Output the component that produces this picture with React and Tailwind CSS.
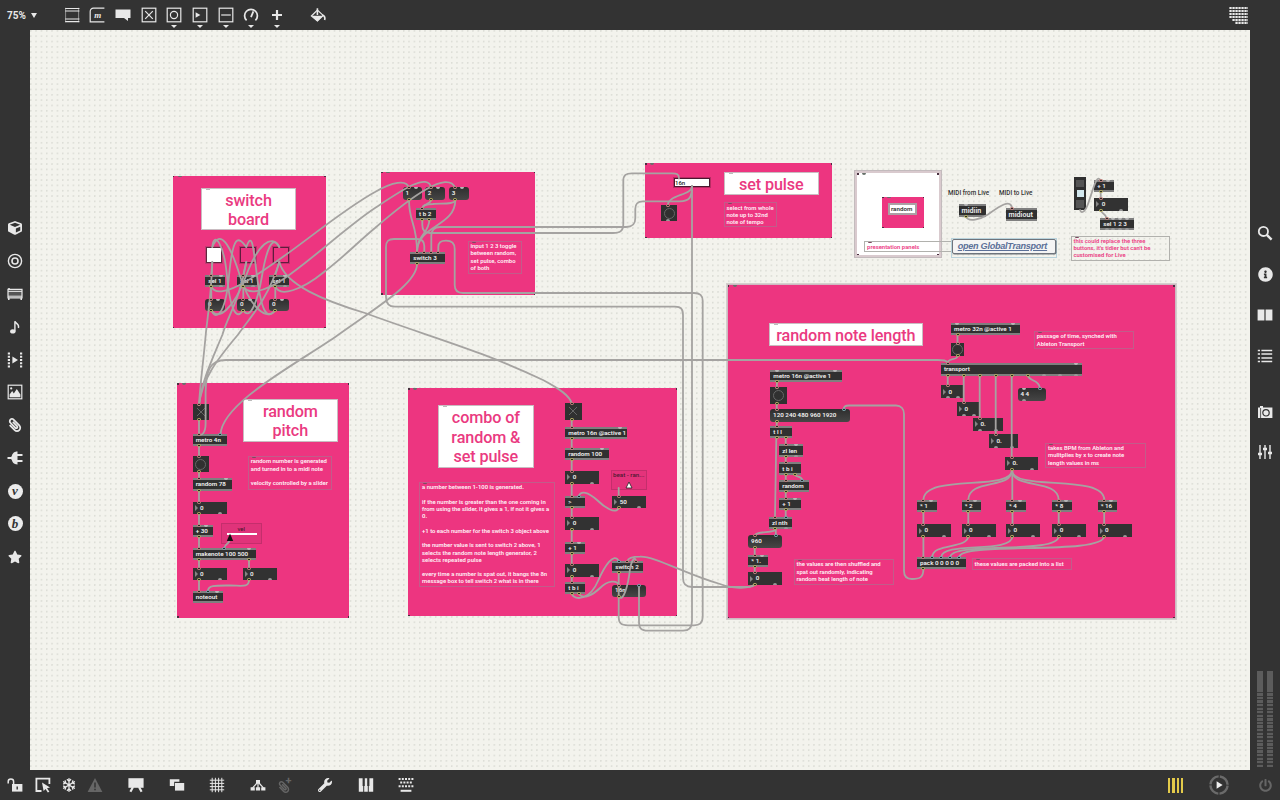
import React from "react";
import { FaCube, FaStar, FaWrench, FaPaperclip, FaInfoCircle, FaSearch, FaPowerOff, FaRegSnowflake } from "react-icons/fa";

const PORT = { r: "#d58a86", y: "#c3bd62", b: "#7fb3bd", g: "#b5b5b5" };

function Ports({ list, edge, h }) {
  return list.map(([x, c], i) => (
    <span
      key={i}
      className={`absolute block ${
        c === "g"
          ? edge === "top"
            ? "h-[2px] w-[4px] rounded-b-full bg-[#b9b9b9]"
            : "h-[2px] w-[4px] rounded-t-full bg-[#9a9a9a]"
          : "h-[3px] w-[4px] rounded-full border bg-[#2a2a2a]"
      }`}
      style={{ left: x - 2, top: edge === "top" ? (c === "g" ? 0 : -1) : h - 2, borderColor: PORT[c] }}
    />
  ));
}

function Node({ n }) {
  const [kind, x, y, w, h, label] = n;
  const shape = {
    obj: "bg-[#303030] border-y-[2px] border-[#7f7f7f] pl-[3px]",
    big: "bg-[#303030] border-y-[2px] border-[#7f7f7f] pl-[2.6px]",
    msg: "rounded-[3px] bg-linear-to-b from-[#2e2e2e] to-[#464646] pl-[2.8px] pb-[1px]",
    num: "bg-[#323232] pl-[2px] gap-[2.4px]",
    bang: "bg-[#303030] justify-center",
    tog: "bg-[#303030] justify-center",
  }[kind];
  return (
    <div
      className={`absolute flex items-center whitespace-pre leading-none font-semibold text-[#f1f1f1] ${
        kind === "big" ? "text-[7.1px]" : "text-[6.25px]"
      } ${shape}`}
      style={{ left: x, top: y, width: w, height: h }}
    >
      {kind === "num" && <span className="block h-0 w-0 border-y-[3px] border-l-[3.4px] border-y-transparent border-l-[#858585]" />}
      {kind === "bang" && <span className="block h-[11px] w-[11px] rounded-full border border-[#666]" />}
      {kind === "tog" && (
        <svg viewBox="0 0 10 10" className="h-[10px] w-[10px]" stroke="#666" strokeWidth="1">
          <path d="M1 1L9 9M9 1L1 9" />
        </svg>
      )}
      {label && <span>{label}</span>}
    </div>
  );
}

function NodePorts({ n }) {
  const [, x, y, w, h, , ins = [], outs = []] = n;
  return (
    <div className="absolute" style={{ left: x, top: y, width: w, height: h }}>
      <Ports list={ins} edge="top" h={h} />
      <Ports list={outs} edge="bottom" h={h} />
    </div>
  );
}

const S = 6.3;
const NODES = [
  // switch board
  ["obj", 205.3, 274.7, 19.7, 12, "sel 1", [[6, "r"], [16, "g"]], [[6, "y"], [16, "g"]]],
  ["obj", 237.3, 274.7, 19.7, 12, "sel 1", [[6, "r"], [16, "g"]], [[6, "y"], [16, "g"]]],
  ["obj", 269.3, 274.7, 19.7, 12, "sel 1", [[6, "r"], [16, "g"]], [[6, "y"], [16, "g"]]],
  ["msg", 205.3, 298.7, 19.7, 12.3, "0", [[6, "r"], [13, "g"]], [[6, "y"]]],
  ["msg", 237.3, 298.7, 19.7, 12.3, "0", [[6, "r"], [13, "g"]], [[6, "y"]]],
  ["msg", 269.3, 298.7, 19.7, 12.3, "0", [[6, "r"], [13, "g"]], [[6, "y"]]],
  // selector
  ["msg", 402.7, 187.3, 19.7, 12.7, "1", [[6.3, "r"], [13.3, "g"]], [[6.3, "y"]]],
  ["msg", 425, 187.3, 19.7, 12.7, "2", [[6.3, "r"], [13.3, "g"]], [[6.3, "y"]]],
  ["msg", 449, 187.3, 19.7, 12.7, "3", [[6.3, "r"], [13.3, "g"]], [[6.3, "y"]]],
  ["obj", 416, 208.3, 19.7, 12, "t b 2", [[6.3, "r"]], [[6.3, "y"], [13.4, "y"]]],
  ["obj", 410.3, 251.7, 34.4, 12, "switch 3", [[6.7, "r"], [14, "r"], [21, "r"], [28, "r"]], [[6.7, "y"]]],
  // set pulse
  ["bang", 661.3, 205, 16.2, 16.2, "", [[6.4, "r"]], [[6.4, "g"]]],
  // midi helpers
  ["big", 959, 203.7, 27, 13, "midiin", [[6.5, "g"]], [[6.5, "y"]]],
  ["big", 1006, 208.3, 31.3, 12.7, "midiout", [[6.3, "r"]], []],
  ["obj", 1094.3, 180, 19.7, 12, "+ 1", [[6.3, "r"], [13.5, "g"]], [[6.3, "y"]]],
  ["num", 1094.3, 198, 33.7, 12.7, "0", [[6.3, "r"]], [[6.3, "y"], [27, "g"]]],
  ["obj", 1100.3, 218, 34, 12.3, "sel 1 2 3", [[6.3, "r"], [13, "g"], [20, "g"], [27, "g"]], [[6.3, "g"], [13, "g"], [20, "g"], [27, "g"]]],
  // random pitch
  ["tog", 192.7, 404, 16.3, 16.3, "", [[S, "r"]], [[S, "y"]]],
  ["obj", 192.7, 434, 34, 12, "metro 4n", [[S, "r"], [27.7, "b"]], [[S, "y"]]],
  ["bang", 192.7, 456, 16.3, 16, "", [[S, "r"]], [[S, "y"]]],
  ["obj", 192.7, 478.3, 39.3, 12.3, "random 78", [[S, "r"], [33, "g"]], [[S, "y"]]],
  ["num", 192.7, 502, 34, 12.3, "0", [[S, "r"]], [[S, "y"], [27, "g"]]],
  ["obj", 192.7, 524.7, 20, 12, "+ 30", [[S, "r"], [13.5, "g"]], [[S, "y"]]],
  ["obj", 192.7, 548, 63.3, 12, "makenote 100 500", [[S, "r"], [31.7, "b"], [56.3, "g"]], [[S, "y"], [56.3, "y"]]],
  ["num", 192.7, 568, 34, 12.3, "0", [[S, "r"]], [[S, "y"], [27, "g"]]],
  ["num", 242.7, 568, 34, 12.3, "0", [[S, "r"]], [[S, "y"], [27, "g"]]],
  ["obj", 192.7, 590.7, 30.6, 12, "noteout", [[S, "r"], [15.2, "b"], [24, "g"]], []],
  // combo
  ["tog", 565.3, 403.3, 16.4, 16.4, "", [[S, "r"]], [[S, "y"]]],
  ["obj", 565.3, 426.7, 61.7, 12.3, "metro 16n @active 1", [[S, "r"], [55, "g"]], [[S, "y"]]],
  ["obj", 565.3, 448.3, 44, 12, "random 100", [[S, "r"], [37, "g"]], [[S, "y"]]],
  ["num", 565.3, 471, 34, 12.7, "0", [[S, "r"]], [[S, "y"], [27, "g"]]],
  ["obj", 565.3, 496, 19.7, 12.3, ">", [[S, "r"], [13.3, "b"]], [[S, "y"]]],
  ["num", 565.3, 517, 34, 12.7, "0", [[S, "r"]], [[S, "y"], [27, "g"]]],
  ["obj", 565.3, 541.7, 19.7, 12, "+ 1", [[S, "r"], [13.3, "g"]], [[S, "y"]]],
  ["num", 565.3, 564, 34, 12.7, "0", [[S, "r"]], [[S, "y"], [27, "g"]]],
  ["obj", 565.3, 582.3, 19.7, 12, "t b i", [[S, "r"]], [[S, "y"], [13.6, "y"]]],
  ["num", 612.3, 496, 33.7, 12.3, "50", [[S, "r"]], [[S, "y"], [27, "g"]]],
  ["obj", 612.3, 560.7, 30.7, 12.3, "switch 2", [[S, "b"], [15, "r"], [24, "r"]], [[S, "y"]]],
  ["msg", 612.3, 584.7, 33.7, 12.6, "16n", [[S, "r"], [26.7, "b"]], [[S, "y"]]],
  // random note length, left chain
  ["obj", 770.3, 369.7, 71.7, 12, "metro 16n @active 1", [[6.3, "g"], [64.5, "g"]], [[6.5, "y"]]],
  ["bang", 770.3, 387, 16.7, 16.7, "", [[6.5, "r"]], [[6.5, "y"]]],
  ["msg", 770.3, 409, 79.7, 12.7, "120 240 480 960 1920", [[6.3, "r"], [73.3, "b"]], [[6.3, "y"]]],
  ["obj", 770.3, 426, 21.7, 12.3, "t l l", [[6.3, "r"]], [[6.3, "y"], [15.3, "y"]]],
  ["obj", 779.3, 444.3, 23.4, 12.7, "zl len", [[6.3, "r"], [16.5, "g"]], [[6.3, "y"], [16.5, "g"]]],
  ["obj", 779.3, 462.3, 21.7, 12.7, "t b i", [[6.3, "r"]], [[6.3, "y"], [15.7, "y"]]],
  ["obj", 779.3, 479.7, 29.7, 12.3, "random", [[6.3, "r"], [23, "b"]], [[6.3, "y"]]],
  ["obj", 779.3, 498, 21.7, 12, "+ 1", [[6.3, "r"], [15.5, "g"]], [[6.3, "y"]]],
  ["obj", 769, 516.7, 23, 12.3, "zl nth", [[6, "r"], [16.5, "b"]], [[6, "y"], [16.5, "g"]]],
  ["msg", 748.3, 535, 33.7, 13.3, "960", [[6.4, "r"], [27.3, "b"]], [[6.4, "y"]]],
  ["obj", 748.3, 555, 19.7, 12, "* 1.", [[6.4, "r"], [13.5, "g"]], [[6.4, "y"]]],
  ["num", 748.3, 572, 34, 13, "0", [[6.4, "r"]], [[6.4, "y"], [27, "g"]]],
  // random note length, transport
  ["obj", 951, 323, 68.7, 12.3, "metro 32n @active 1", [[6.3, "g"], [62, "g"]], [[6.5, "y"]]],
  ["bang", 951, 343, 13.3, 13.3, "", [[6.5, "r"]], [[6.5, "y"]]],
  ["obj", 941, 363, 141, 12.7, "transport", [[6.7, "r"], [134.7, "g"]], [[6.7, "y"], [22.7, "y"], [38.7, "y"], [54.7, "y"], [70.7, "y"], [86.7, "y"], [102.7, "g"], [118.7, "g"], [134.7, "g"]]],
  ["num", 941, 385, 22.3, 13.3, "0", [[6.7, "r"]], [[6.7, "g"], [17, "g"]]],
  ["num", 957, 402.3, 22.7, 13.5, "0", [[6.7, "r"]], [[6.7, "g"], [17, "g"]]],
  ["num", 973, 417.7, 30, 13.3, "0.", [[6.7, "r"]], [[6.7, "g"], [23, "g"]]],
  ["num", 989, 434.3, 29, 13.5, "0.", [[6.7, "r"]], [[6.7, "g"], [23, "g"]]],
  ["num", 1005, 456.7, 33.3, 13.3, "0.", [[6.7, "r"]], [[6.7, "y"], [27, "g"]]],
  ["msg", 1017.7, 387.7, 28.6, 13.3, "4 4", [[6.3, "g"], [22.3, "b"]], [[6.3, "g"]]],
  ...[[917, "* 1"], [961.7, "* 2"], [1006, "* 4"], [1052.3, "* 8"], [1097.7, "* 16"]].flatMap(([x, t]) => [
    ["obj", x, 499.7, 19.7, 12, t, [[6.4, "r"], [13.5, "g"]], [[6.4, "y"]]],
    ["num", x, 524, 34, 13, "0", [[6.4, "r"]], [[6.4, "y"], [27, "g"]]],
  ]),
  ["obj", 917, 557, 49, 12.3, "pack 0 0 0 0 0", [[6.4, "r"], [15.4, "b"], [24.4, "b"], [33.4, "b"], [42.4, "b"]], [[6.4, "y"]]],
];

const PANELS = [
  [172.5, 175.5, 153, 152.5],
  [381, 171.5, 154, 123],
  [645, 163, 187, 75.3],
  [177.3, 383.3, 172, 234.5],
  [408, 388, 269, 228],
  [882, 196.5, 42, 31.5],
];

const TITLES = [
  [200.7, 187.5, 95.6, 42.7, "switch\nboard"],
  [723.7, 171.7, 95.3, 23.3, "set pulse"],
  [242.7, 399, 95.3, 42.7, "random\npitch"],
  [438, 405, 95.7, 62.7, "combo of\nrandom &\nset pulse"],
  [769, 322.7, 153.7, 23.3, "random note length"],
];

const COMMENTS = [
  [467.7, 240.7, 54, 33.7, "input 1 2 3 toggle\nbetween random,\nset pulse, combo\nof both"],
  [723.7, 202.2, 53.6, 25.3, "select from whole\nnote up to 32nd\nnote of tempo"],
  [248, 456, 84.3, 33.7, "random number is generated\nand turned in to a midi note\n\nvelocity controlled by a slider"],
  [419.3, 482, 135.7, 105.3, "a number between 1-100 is generated.\n\nif the number is greater than the one coming in\nfrom using the slider, it gives a 1, if not it gives a\n0.\n\n+1 to each number for the switch 3 object above\n\nthe number value is sent to switch 2 above, 1\nselects the random note length generator, 2\nselects repeated pulse\n\nevery time a number is spat out, it bangs the 8n\nmessage box to tell switch 2 what is in there"],
  [793.7, 559, 100.3, 25.7, "the values are then shuffled and\nspat out randomly, indicating\nrandom beat length of note"],
  [1034, 331, 100, 18, "passage of time, synched with\nAbleton Transport"],
  [1045.3, 442.7, 100.4, 25.6, "takes BPM from Ableton and\nmulitplies by x to create note\nlength values in ms"],
  [971.7, 558.3, 100.3, 11.4, "these values are packed into a list"],
  [864.3, 241.3, 100, 10.4, "presentation panels", true],
  [1070.7, 235.5, 99.6, 25.3, "this could replace the three\nbuttons, it's tidier but can't be\ncustomised for Live", true],
];

const CORDS = [
  // switch board loops
  "M212.3 262L211.3 275M246.3 262L243.3 275M279.3 262L275.3 275",
  "M211.3 286V299M243.3 286V299M275.3 286V299",
  "M211.3 310C215 320 225 318 229 276S238 236 246.3 247",
  "M211.3 310C218 322 234 308 246 276S272 233 279.3 247",
  "M243.3 310C236 322 230 308 227 276S214 230 212.3 247",
  "M243.3 310C250 322 258 300 262 276S272 233 279.3 247",
  "M275.3 310C268 322 250 308 240 276S220 228 212.3 247",
  "M275.3 310C266 322 261 308 257 276S252 232 246.3 247",
  // sel outlets to the three messages
  "M211.3 286C214 295 228 292 245 282C290 256 335 214 375 192C392 182 407 179 409 188",
  "M243.3 286C248 296 265 291 282 280C312 260 345 228 375 208C402 190 428 172 431.3 188",
  "M275.3 286C279 298 302 290 324 272C345 256 358 242 375 228C412 196 448 170 455.3 188",
  // toggles to metros
  "M212.3 262C211 300 207 320 205.7 335C203 365 200 385 199 405",
  "M246.3 262C240 300 228 315 222.3 335C212 360 202 380 199 405",
  "M279.3 262C268 300 248 320 237.7 335C215 362 202 380 199 405",
  "M279.3 262C285 285 325 301 365 313C430 337 480 350 543 380C560 389 570 396 571.7 403.5",
  "M417 264C417 283 380 305 338 335C300 362 222 402 220.5 434.5",
  "M947.7 363C947 360 943 360 938 360H226C209 360 206 372 205.6 392V424C205.4 434 201 436 199 434",
  // selector
  "M409 200C409 223 417 223 417 252",
  "M431 200C431 204 422.3 204 422.3 208.5",
  "M455.3 200C455 205 440 203 433 204C426 204 422.3 205 422.3 208.5",
  "M455.3 200C455.3 227 417 225 417 252",
  "M429.3 220C429.3 233 417 235 417 252",
  "M422.3 220V225C422.3 230 424 233 430 233H613C620 233 623.3 231 623.3 224V181C623.3 175 626 173.3 632 173.3H672C677 173.3 679 174 679 178.5",
  "M431.3 252V236C431.3 230 434 227 440 227H626C633 227 635.3 224 635.3 218V209C635.3 204 637 201.3 643 201.3H680C689 201.3 692 198 692 186",
  "M424.3 252V246C424.3 241 422 239 417 239H394C388 239 386 241.5 386 247V297C386 303 389 306.7 395 306.7H675C681 306.7 683 309 683 315V578C683 584 686 587 692 587H745C751 587 754.7 586 754.7 584",
  "M438.3 252V247C438.3 242 441 240.7 446 240.7C452 240.7 454.7 243 454.7 249V285C454.7 290 457 293 463 293H694C700 293 702.7 295 702.7 301V617C702.7 623 700 625.3 694 625.3H628C621 625.3 618.7 623 618.7 617V573",
  "M692 186C692 196 667.7 194 667.7 206",
  "M692 186V621C692 628 689 630.7 683 630.7H648C641 630.7 639 628 639 622V586",
  // midi helpers
  "M965.7 216C968 223 981 219 988 214.5C997 208 1011 197 1012.3 209",
  "M1080 210C1082 215 1086 210 1088 204C1093 190 1097 172 1100.7 181",
  "M1100.7 191.5V198.5M1100.7 210C1101 214 1106 213 1106.7 218.5",
  // random pitch
  "M199 420V434M199 446V456M199 472V479M199 490V502M199 514V525M199 536V548M199 560V568M199 580V591",
  "M229.3 541C228 545 225 543 224.3 548.5M249 560V568",
  "M249 580C249 588 241 585.5 230 585.5C216 585.5 208 585 207.9 591",
  // combo
  "M571.7 419V427M571.7 439V449M571.7 460V471M571.7 483V496M571.7 508V517M571.7 529V542M571.7 553V564M571.7 576V583",
  "M618.7 488V496",
  "M618.7 508C616 515 604 507 597 500C588 492 581 490 578.5 496.5",
  "M571.7 594C575 601 590 600 598 581C605 565 614 552 618.7 561",
  "M579 594C583 600 593 595 600 588C608 580 617 580 618.7 585",
  "M619 597C623 602 628 587 630 569C632 559 635 556 636 561",
  "M754.7 584C750 590 730 588 720 584C685 574 655 556 640 556.6C632 556.6 628 558 627.5 561",
  // random note length, left chain
  "M777 381.5L776.7 388M776.7 403V410M776.7 421V427M776.3 438L775 517M785.7 438V445M785.7 456.5V463M785.7 474.5V480M785.7 491.5V499M785.7 510V517",
  "M795 474.5C796 478 801 475 802.3 480M775.8 529V536M776 529C775 534 755 530 754.7 536M754.7 548V556M754.7 566.5V573",
  "M843.7 410C843.5 406.5 845 405.5 849 405.5H896C901 405.5 904 409 904 414V571C904 576 907 579 912 579C919 579 923.4 578 923.4 569",
  // random note length, transport
  "M957.5 335V343.5M957.5 356C957 361 948 357 947.7 363",
  "M947.7 375V386M963.7 375V403M979.7 375V418M995.7 375V435M1011.7 375V457M1027.7 375C1029 382 1039 379 1040 388",
  "M1012 470C1012 492 924 473 923.4 500",
  "M1012 470C1012 490 968.5 478 968.3 500",
  "M1012.3 470V500",
  "M1012 470C1012 490 1058.5 478 1058.7 500",
  "M1012 470C1012 492 1104 473 1104.3 500",
  "M923.4 511V525M968.3 511V525M1012.5 511V525M1058.7 511V525M1104.2 511V525M923.4 536V557",
  "M968.3 536C968.3 549 932.3 543 932.3 557",
  "M1012.5 536C1012.5 554 941.5 541 941.3 557",
  "M1058.7 536C1058.7 555 951 541 950.3 557",
  "M1104.2 536C1104.2 556 960 541 959.3 557",
];

const Box = ({ className, x, y, w, h, children }) => (
  <div className={`absolute ${className}`} style={{ left: x, top: y, width: w, height: h }}>
    {children}
  </div>
);

function Handles() {
  return (
    <>
      <i className="absolute top-0 left-0 h-[1.5px] w-[1.5px] bg-[#4a3040]" />
      <i className="absolute top-0 right-0 h-[1.5px] w-[1.5px] bg-[#4a3040]" />
      <i className="absolute bottom-0 left-0 h-[1.5px] w-[1.5px] bg-[#4a3040]" />
      <i className="absolute right-0 bottom-0 h-[1.5px] w-[1.5px] bg-[#4a3040]" />
      <i className="absolute top-0 left-[5px] h-[1.5px] w-[4px] rounded-b-full bg-[#667069]" />
    </>
  );
}

function Patch() {
  return (
    <div className="absolute -top-[30px] -left-[30px] h-[800px] w-[1280px]">
      <Box className="border-[2px] border-[#d9cace] bg-white outline outline-[#c3bbbd]" x={855} y={171} w={85.5} h={86}>
        <Handles />
      </Box>
      {PANELS.map(([x, y, w, h], i) => (
        <Box key={i} className="rounded-[1px] bg-[#ed3580]" x={x} y={y} w={w} h={h}>
          <Handles />
        </Box>
      ))}
      <Box className="border border-[#cfb9c2] bg-[#ed3580] outline outline-[#d3cfcc]" x={726.5} y={284} w={449} h={335}>
        <Handles />
      </Box>

      {TITLES.map(([x, y, w, h, t], i) => (
        <Box
          key={i}
          className="flex items-center justify-center border border-[#c9bcc1] bg-white pt-[1.5px] text-center text-[16.2px] leading-[19.1px] font-medium tracking-[-0.12px] whitespace-pre text-[#ea3a81]"
          x={x}
          y={y}
          w={w}
          h={h}
        >
          {t}
          <i className="absolute top-0 left-[4px] h-[1px] w-[4px] bg-[#bbb]" />
        </Box>
      ))}

      {COMMENTS.map(([x, y, w, h, t, pink], i) => (
        <Box
          key={i}
          className={`border pt-[1.4px] pl-[1.8px] text-[5.9px] leading-[7.23px] font-semibold whitespace-pre ${
            pink ? "border-[#b1b1ad] text-[#ec3d84]" : "border-[#c25c8a] text-[#fff0f6]"
          }`}
          x={x}
          y={y}
          w={w}
          h={h}
        >
          {t}
          <i className="absolute top-0 left-[3px] h-[1px] w-[4px] rounded-b-full bg-[#7d4a60]" />
        </Box>
      ))}

      <Box className="border-[2px] border-[#aaa0a4] bg-white pl-[1px] text-[6.2px] leading-[8.5px] font-semibold text-[#333]" x={888} y={203} w={29.3} h={12}>
        random
      </Box>
      <span className="absolute top-[188.5px] left-[948px] text-[6.3px] leading-[8px] font-medium text-[#333]">MIDI from Live</span>
      <span className="absolute top-[188.5px] left-[999px] text-[6.3px] leading-[8px] font-medium text-[#333]">MIDI to Live</span>
      <Box className="border border-[#b9d3dc]" x={951} y={237.5} w={106.3} h={20} />
      <Box
        className="flex items-center rounded-[2px] border border-[#6e747c] bg-[#f4f4f4] pb-[0.5px] pl-[4.4px] font-['Liberation_Sans',Arial,sans-serif] text-[9.1px] leading-none font-bold tracking-[-0.27px] whitespace-pre text-[#5b7098] italic underline shadow-[0.5px_0.5px_0_#6e747c]"
        x={952.3}
        y={238.5}
        w={103.3}
        h={15.6}
      >
        open GlobalTransport
      </Box>

      <Box className="flex flex-col items-center justify-around bg-[#303030] py-[1px]" x={1074} y={177} w={12} h={33.3}>
        <i className="block h-[7.5px] w-[7.5px] bg-[#555]" />
        <i className="block h-[7px] w-[7px] bg-[#d3e8ee]" />
        <i className="block h-[7.5px] w-[7.5px] bg-[#555]" />
      </Box>

      <Box className="border border-[#61263f] bg-white outline outline-[#c23a72]" x={206} y={246.7} w={16} h={16} />
      <Box className="border border-[#5f1c3d] outline outline-[#c02f6b]" x={240} y={246.7} w={16} h={16} />
      <Box className="border border-[#5f1c3d] outline outline-[#c02f6b]" x={273} y={246.7} w={16} h={16} />

      <Box className="border border-[#4a1830] bg-white pl-[0.5px] text-[6px] leading-[8px] font-medium text-[#222] outline outline-[#b82c63]" x={673.5} y={177.6} w={36} h={9} >
        16n
      </Box>

      <Box className="border border-[#c42e6c] bg-[#e0337a]" x={220.7} y={522.7} w={41} h={21} />
      <span className="absolute top-[524.5px] left-[237.5px] text-[6px] leading-[7px] text-[#3d1527]">vel</span>
      <Box className="bg-white" x={226.7} y={533.3} w={30} h={1.6} />
      <Box className="border border-[#c42e6c] bg-[#e4337b]" x={611.3} y={469.7} w={35.4} h={20.3} />
      <span className="absolute top-[471.5px] left-[613px] text-[6.2px] leading-[7px] font-medium whitespace-pre text-[#4f1a32]">beat - ran...</span>

      {NODES.map((n, i) => (
        <Node key={i} n={n} />
      ))}

      <svg className="absolute top-0 left-0 h-[800px] w-[1280px]" viewBox="0 0 1280 800" fill="none">
        <g stroke="#a5a3a1" strokeWidth="1.8" strokeLinecap="round">
          {CORDS.map((d, i) => (
            <path key={i} d={d} />
          ))}
        </g>
        <path d="M230 533.5L226.8 541H233.2Z" fill="#111" />
        <path d="M629 482L626 488H632Z" fill="#fff" stroke="#222" strokeWidth="0.8" />
      </svg>

      {NODES.map((n, i) => (
        <NodePorts key={i} n={n} />
      ))}
    </div>
  );
}

const Ico = ({ children, className = "" }) => (
  <svg viewBox="0 0 16 16" className={`h-4 w-4 ${className}`} fill="none" stroke="currentColor" strokeWidth="1.2">
    {children}
  </svg>
);

const Square = () => <rect x="1.2" y="1.2" width="13.6" height="13.6" />;

const TOP = [
  [<Ico><path d="M1.6 .8V15.2M14.6 .8V15.2" strokeWidth="1" stroke="#8f8f8f" /><path d="M1.2 1.5H15.4M1.2 4H15.4M1.2 12H15.4M1.2 14.6H15.4" /></Ico>],
  [<Ico><path d="M15.4 1.2H4.5C2.5 1.2 1.2 2.5 1.2 4.5V14.8H15.4" /><text x="8.8" y="11" fontSize="9" textAnchor="middle" fontFamily="Liberation Serif, serif" fontStyle="italic" fontWeight="bold" fill="currentColor" stroke="none">m</text></Ico>],
  [<Ico><path d="M.5 2.5H15.5V11H13V14L9 11H.5Z" fill="currentColor" stroke="none" /></Ico>],
  [<Ico><Square /><path d="M4.2 4.2L11.8 11.8M11.8 4.2L4.2 11.8" /></Ico>],
  [<Ico><Square /><circle cx="8" cy="8" r="3.6" /></Ico>, 1],
  [<Ico><Square /><path d="M3.6 5.2V10.8L8.4 8Z" fill="currentColor" stroke="none" /></Ico>, 1],
  [<Ico><Square /><path d="M3.2 8H12.8" /></Ico>, 1],
  [<Ico><path d="M3.6 13.4A6.4 6.4 0 1 1 12.4 13.4" strokeWidth="1.7" /><path d="M8 10.2L10.4 4.4" strokeWidth="1.8" /></Ico>, 1],
  [<Ico><path d="M8 3V13M3 8H13" strokeWidth="2.2" /></Ico>, 1],
];

function Circled({ letter }) {
  return (
    <span className="flex h-[15px] w-[15px] items-center justify-center rounded-full bg-[#ececec] pb-[1px] font-['Liberation_Serif',serif] text-[13px] leading-none font-bold text-[#333] italic">
      {letter}
    </span>
  );
}

const LEFT = [
  <FaCube size={14} />,
  <Ico><circle cx="8" cy="8" r="6.6" strokeWidth="1.4" /><circle cx="8" cy="8" r="3" strokeWidth="1.6" /></Ico>,
  <Ico><path d="M1 3.4H15V11.8H1Z" fill="#555" strokeWidth="1.2" /><path d="M1 5.4H15M1 10.2H15" strokeWidth="1" /><path d="M2 2V3.4M1.8 12V14M14.2 12V14" strokeWidth="1.5" /></Ico>,
  <Ico><ellipse cx="5.8" cy="12.4" rx="2.7" ry="2.1" fill="currentColor" stroke="none" /><path d="M7.9 12.4V2.2C8.4 4.6 12.8 5 11.4 9" strokeWidth="1.4" /></Ico>,
  <Ico><path d="M1.9 .6V15.4M14.1 .6V15.4" strokeWidth="2.2" strokeDasharray="2 1.2" /><path d="M5.4 4.6V11.4L11 8Z" fill="currentColor" stroke="none" /></Ico>,
  <Ico><Square /><path d="M2.6 13.2V10.4L5.2 7L6.8 9.4L9.8 5L13.4 10.4V13.2Z" fill="currentColor" stroke="none" /><circle cx="4.2" cy="4.4" r="1.1" fill="currentColor" stroke="none" /></Ico>,
  <FaPaperclip size={14} className="-scale-x-100" />,
  <Ico><path d="M.5 8H4M10 5H15.5M10 11H15.5" strokeWidth="1.8" /><path d="M10.5 1.6V14.4C6.6 14.4 5.4 12 4.8 10L3.4 8L4.8 6C5.4 4 6.6 1.6 10.5 1.6Z" fill="currentColor" stroke="none" /></Ico>,
  <Circled letter="v" />,
  <Circled letter="b" />,
  <FaStar size={14} />,
];

const RIGHT = [
  <Ico><circle cx="6.4" cy="6.4" r="4.6" strokeWidth="1.8" /><path d="M9.8 9.8L14.6 14.6" strokeWidth="2.4" /></Ico>,
  <FaInfoCircle size={15} />,
  <Ico><path d="M.6 2.6H7.4V13.4H.6ZM8.6 2.6H15.4V13.4H8.6Z" fill="currentColor" stroke="none" /></Ico>,
  <Ico><path d="M.8 2.4H3M.8 6.1H3M.8 9.9H3M.8 13.6H3M4.4 2.4H15.2M4.4 6.1H15.2M4.4 9.9H15.2M4.4 13.6H15.2" strokeWidth="1.5" /></Ico>,
];
const RIGHT2 = [
  <Ico><path d="M1 3.6H3V2H6V3.6H15.4V14H1Z" fill="currentColor" stroke="none" /><circle cx="9" cy="8.8" r="3.2" stroke="#333" /><path d="M3.6 4V14" stroke="#333" strokeWidth=".8" /></Ico>,
  <Ico><path d="M3 1V15M8 1V15M13 1V15" strokeWidth="1.4" /><path d="M1 10H5M6 5H10M11 9H15" strokeWidth="2.4" /></Ico>,
];

const BOTTOM = [
  [15, <Ico><path d="M1.2 6.4V4.4C1.2 1.2 6.6 1.2 6.6 4.4V7" strokeWidth="1.5" /><path d="M5 7H15.4V14.6H5Z" fill="currentColor" stroke="none" /><path d="M10.2 9.4V12.4" stroke="#333" strokeWidth="1.4" /></Ico>],
  [43, <Ico><path d="M6.5 14H1.4V1.6H14.4V7" strokeWidth="1.8" /><path d="M7 5.6L15 10.4L12 11.2L14.4 14.8L12.8 15.6L10.6 12L8.6 14Z" fill="currentColor" stroke="none" /></Ico>],
  [69, <FaRegSnowflake size={14} />],
  [94.5, <Ico className="text-[#666]"><path d="M8 1L15.4 15H.6Z" fill="currentColor" stroke="none" /><path d="M8 5.6V10.4M8 11.8V13.2" stroke="#333" strokeWidth="1.5" /></Ico>],
  [135.5, <Ico><path d="M.4 1.2H15.6V10.8H.4Z" fill="currentColor" stroke="none" /><path d="M5 10L2.4 14.8M11 10L13.6 14.8" strokeWidth="2.2" /></Ico>],
  [176.5, <Ico><path d="M.8 2.2H10.4V4.8H5.2V9H.8Z" fill="currentColor" stroke="none" /><path d="M6 6H15.2V13.6H6Z" fill="currentColor" stroke="none" /></Ico>],
  [217, <Ico><path d="M3.2 .8V15.2M6.4 .8V15.2M9.6 .8V15.2M12.8 .8V15.2M.8 3.2H15.2M.8 6.4H15.2M.8 9.6H15.2M.8 12.8H15.2" strokeWidth="1" /></Ico>],
  [258, <Ico><path d="M6 3H10V6.4H6ZM.6 10.2H4.8V13.6H.6ZM5.9 10.2H10.1V13.6H5.9ZM11.2 10.2H15.4V13.6H11.2Z" fill="currentColor" stroke="none" /><path d="M8 6V11M7 6L2.6 10.8M9 6L13.4 10.8" /></Ico>],
  [283.5, <span className="relative flex text-[#666]"><FaPaperclip size={12} className="mt-[3px] -scale-x-100" /><span className="absolute -top-[3px] left-[8px] text-[11px] leading-none font-bold">+</span></span>],
  [324.5, <FaWrench size={14} />],
  [365.5, <Ico><path d="M.8 1.2H4.6V9H5.2V14.8H.8ZM6.2 14.8V9H6.8V1.2H9.2V9H9.8V14.8ZM11.4 1.2H15.2V14.8H10.8V9H11.4Z" fill="currentColor" stroke="none" /></Ico>],
  [406, <Ico><path d="M.6 2H15.4M.6 9.2H15.4" strokeWidth="2" strokeDasharray="2 1.2" /><path d="M2.2 5.6H14" strokeWidth="2" strokeDasharray="2 1.2" /><path d="M2.6 13.8H13.4" strokeWidth="2" /></Ico>],
];

function Meter() {
  return (
    <div className="flex h-[96px] w-[6.5px] flex-col">
      <div className="h-[21px] bg-[#5c5c5c]" />
      <div className="flex-1 bg-[repeating-linear-gradient(to_bottom,#3a3a3a_0,#3a3a3a_1.3px,#5c5c5c_1.3px,#5c5c5c_3.57px)]" />
    </div>
  );
}

export default function App() {
  return (
    <div className="flex h-[800px] w-[1280px] flex-col overflow-hidden bg-[#333] font-[Roboto,'Liberation_Sans',sans-serif] text-[#e8e8e8]">
      <header className="flex h-[30px] shrink-0 items-center">
        <div className="flex w-[58.8px] items-center gap-[5px] pl-[7px] text-[10px] font-bold">
          75%
          <span className="block h-0 w-0 border-x-[3px] border-t-[5px] border-x-transparent border-t-[#e8e8e8]" />
        </div>
        {TOP.map(([icon, menu], i) => (
          <div key={i} className="relative flex h-full w-[25.7px] items-center justify-center">
            {icon}
            {menu && <span className="absolute bottom-[2px] block h-0 w-0 border-x-[3px] border-t-[3px] border-x-transparent border-t-[#e8e8e8]" />}
          </div>
        ))}
        <div className="ml-[20px] flex">
          <Ico>
            <path d="M1.4 9L7.4 3L13.2 8.4L7.4 14Z" strokeWidth="1.2" />
            <path d="M1.6 8.8H13L7.4 14.4Z" fill="currentColor" stroke="none" />
            <path d="M7.4 8V1.2M12.4 8C15 9 15.2 11 14.6 13" strokeWidth="1.6" />
          </Ico>
        </div>
        <div className="mr-[32px] ml-auto flex">
          <svg viewBox="0 0 19 18" className="h-[18px] w-[19px]" fill="none" stroke="currentColor" strokeWidth="2.2">
            <path d="M.4 2H19M.4 5H19M.4 8H19M.4 11H19" strokeDasharray="2.3 .7" />
            <path d="M3.4 14H19M6.4 16.8H19" strokeDasharray="2.3 .7" />
          </svg>
        </div>
      </header>

      <div className="flex h-[740px]">
        <aside className="flex w-[30px] flex-col items-center pt-[181.5px]">
          {LEFT.map((icon, i) => (
            <div key={i} className="flex h-[32.9px] shrink-0 items-center">
              {icon}
            </div>
          ))}
        </aside>

        <main className="relative flex-1 overflow-hidden bg-[#f3f3ed] bg-[radial-gradient(circle_at_0.7px_0.8px,#dcddd6_0.6px,transparent_1.1px)] bg-[size:5.333px_5.333px]">
          <Patch />
        </main>

        <aside className="flex w-[30px] flex-col items-center pt-[183px]">
          {RIGHT.map((icon, i) => (
            <div key={i} className="flex h-[40.8px] shrink-0 items-center">
              {icon}
            </div>
          ))}
          <div className="h-[15px]" />
          {RIGHT2.map((icon, i) => (
            <div key={i} className="flex h-[40.8px] shrink-0 items-center">
              {icon}
            </div>
          ))}
          <div className="mt-auto mb-[3px] flex gap-[3.3px]">
            <Meter />
            <Meter />
          </div>
        </aside>
      </div>

      <footer className="flex h-[30px] items-center">
        {BOTTOM.map(([cx, icon], i) => (
          <div
            key={i}
            className="flex w-4 shrink-0 justify-center"
            style={{ marginLeft: i ? cx - BOTTOM[i - 1][0] - 16 : cx - 8 }}
          >
            {icon}
          </div>
        ))}
        <div className="ml-auto flex h-[15px] w-[15px] gap-[2px]">
          {[0, 1, 2, 3].map((i) => (
            <i key={i} className="block w-[2px] flex-1 bg-[#e3ca4a]" />
          ))}
        </div>
        <div className="ml-[26px] flex">
          <svg viewBox="0 0 20 20" className="h-5 w-5" fill="none">
            <circle cx="10" cy="10" r="8.6" stroke="#6a6a6a" strokeWidth="2.4" strokeDasharray="12.3 1.2" strokeDashoffset="-.6" />
            <path d="M7.6 6.2V13.8L13.6 10Z" fill="#efefef" />
          </svg>
        </div>
        <div className="mr-[8.5px] ml-[29.5px] flex text-[#666]">
          <FaPowerOff size={13} />
        </div>
      </footer>
    </div>
  );
}
